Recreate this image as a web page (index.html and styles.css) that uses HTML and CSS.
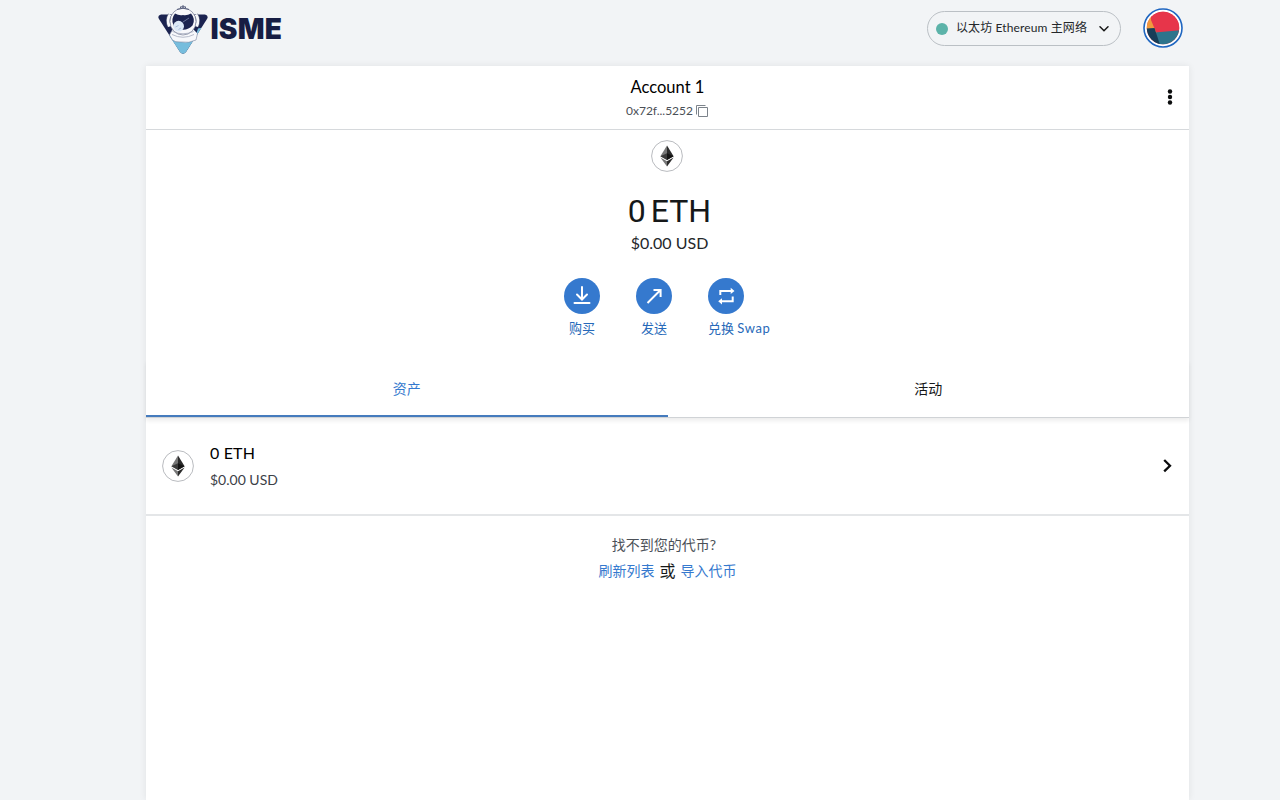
FILE: index.html
```html
<!DOCTYPE html>
<html lang="zh-CN">
<head>
<meta charset="utf-8">
<title>ISME</title>
<link rel="stylesheet" href="styles.css">
</head>
<body>
<svg width="0" height="0" class="symbols">
  <symbol id="eth" viewBox="0 0 32 32">
    <circle cx="16" cy="16" r="15.4" fill="#fff" stroke="#b9bbbf" stroke-width="1"/>
    <path d="M16 5.600 9.400 16.200 16 20z" fill="#777"/>
    <path d="M16 5.600 22.600 16.200 16 20z" fill="#2b2b2b"/>
    <path d="M9.400 16.200 16 13.300V20z" fill="#3a3a3a"/>
    <path d="M22.600 16.200 16 13.300V20z" fill="#141414"/>
    <path d="M9.400 17.500 16 21.300v5.200z" fill="#777"/>
    <path d="M22.600 17.500 16 21.300v5.200z" fill="#2b2b2b"/>
  </symbol>
</svg>
<header class="topbar">
  <div class="brand">
    <svg class="brand-mark" viewBox="0 0 52 50" width="52" height="50">
      <path d="M4 9.500H48Q52 10.500 50 14L29 47Q26 50.500 23 47L2 14Q0 10.500 4 9.500z" fill="#1b2350"/>
      <path d="M12.500 31 38 33 41 23.500 44.500 22.800 29 47Q26 50.500 23 47z" fill="#76bddd"/>
      <path d="M12.500 30 15.500 24.500H36.500L40.500 28.500 39 35Q32 38.500 24 37 18 37.500 15.500 35z" fill="#f7f8fb" stroke="#7c849e" stroke-width=".6"/>
      <path d="M13 9.500q-3.500 5.500-.5 12M39 9.500q3.500 5.500.5 12" fill="none" stroke="#626a85" stroke-width="4"/>
      <path d="M13 9.500q-3.500 5.500-.5 12M39 9.500q3.500 5.500.5 12" fill="none" stroke="#f7f8fb" stroke-width="2.800"/>
      <ellipse cx="26" cy="16.500" rx="13" ry="13.500" fill="#f8f8fb" stroke="#747b93" stroke-width=".7"/>
      <path d="M18 8.500Q22 10.800 26 10 30 10.800 34 8.500 39 14 35.500 20.500 32 24.500 26 24.800 20 24.500 16.500 20.500 13.500 14 18 8.500z" fill="#1b2350"/>
      <circle cx="21.600" cy="21.200" r="5.400" fill="#dbe8f7"/>
      <path d="m18.500 22 3-1.500m0 4 2.500-1.500" stroke="#a3b8d8" stroke-width=".9"/>
      <path d="m26 17 6-4" stroke="#8791b4" stroke-width=".7"/>
      <path d="M15.500 26.500Q26 31 36.500 26.500M15 29.500Q26 35 37 29.500" fill="none" stroke="#9aa0b5" stroke-width=".7"/>
      <path d="M20 4.500Q26 2 32 4.500M23.500 3V1.800H28.500V3M26 0V3" fill="none" stroke="#4c5474" stroke-width=".9"/>
    </svg>
    <span class="brand-name">ISME</span>
  </div>
  <div class="network">
    <span class="dot"></span>
    <span class="network-name">以太坊 Ethereum 主网络</span>
    <svg viewBox="0 0 10 6" width="10" height="6"><path d="m1 .8 4 4 4-4" fill="none" stroke="#161616" stroke-width="1.500" stroke-linecap="round"/></svg>
  </div>
  <svg class="avatar" viewBox="0 0 40 40" width="40" height="40">
    <defs><clipPath id="face"><circle cx="20" cy="20" r="16.200"/></clipPath></defs>
    <circle cx="20" cy="20" r="19" fill="#fff" stroke="#1f66c1" stroke-width="1.600"/>
    <g clip-path="url(#face)">
      <path d="M0 0H40V40H0z" fill="#e7354a"/>
      <path d="M3 3 9 8 7 22H2z" fill="#f19a3e"/>
      <path d="M7 9 4 21 13 26 14 23z" fill="#f19a3e"/>
      <path d="M8 12 13 24H40V0H8z" fill="#e7354a"/>
      <path d="M12 24.500 40 22V40H14z" fill="#2e748c"/>
      <path d="M2 20.500 11.500 20 17 37H2z" fill="#173d58"/>
    </g>
  </svg>
</header>
<main class="wallet">
  <section class="account">
    <div class="account-name">Account 1</div>
    <div class="address"><span>0x72f...5252</span>
      <svg viewBox="0 0 12 12" width="12" height="12"><path d="M2.500 2.500h9v9h-9zM.5 9.500V.5H9.500" fill="none" stroke="#7c838b" stroke-width="1"/></svg>
    </div>
    <svg class="more" viewBox="0 0 6 16" width="6" height="16" fill="#0b0c0d"><circle cx="3" cy="2.500" r="2.200"/><circle cx="3" cy="8" r="2.200"/><circle cx="3" cy="13.500" r="2.200"/></svg>
  </section>
  <section class="overview">
    <svg class="token" width="32" height="32"><use href="#eth"/></svg>
    <div class="balance">0 ETH</div>
    <div class="fiat">$0.00 USD</div>
    <div class="actions">
      <div class="action">
        <svg viewBox="0 0 36 36" width="36" height="36"><circle cx="18" cy="18" r="18" fill="#3579ce"/><path d="M18 9V21M13 16.500 18 21.500 23 16.500M10.500 25H25.500" fill="none" stroke="#fff" stroke-width="2" stroke-linecap="round"/></svg>
        <span>购买</span>
      </div>
      <div class="action">
        <svg viewBox="0 0 36 36" width="36" height="36"><circle cx="18" cy="18" r="18" fill="#3579ce"/><path d="M11.500 25 24.500 12M17.500 11.900H24.600V19" fill="none" stroke="#fff" stroke-width="2"/></svg>
        <span>发送</span>
      </div>
      <div class="action action-wide">
        <svg viewBox="0 0 36 36" width="36" height="36"><circle cx="18" cy="18" r="18" fill="#3579ce"/><path d="M12.300 17V12.900H23M24.700 18.500V23.300H13" fill="none" stroke="#fff" stroke-width="2"/><path d="M22.700 9.800 26.500 12.900 22.700 16zM14 20.200 10.200 23.300 14 26.400z" fill="#fff"/></svg>
        <span>兑换 <b>Swap</b></span>
      </div>
    </div>
  </section>
  <nav class="tabs">
    <div class="tab active">资产</div>
    <div class="tab">活动</div>
  </nav>
  <section class="asset">
    <svg class="token-row" width="32" height="32"><use href="#eth"/></svg>
    <div class="asset-text">
      <div class="asset-amount">0 ETH</div>
      <div class="asset-fiat">$0.00 USD</div>
    </div>
    <svg viewBox="0 0 10 14" width="10" height="14"><path d="m1.200 1 5.800 5.700-5.800 5.700" fill="none" stroke="#0b0c0d" stroke-width="2.300"/></svg>
  </section>
  <footer class="missing">
    <div class="question">找不到您的代币?</div>
    <div class="links"><a>刷新列表</a><span>或</span><a>导入代币</a></div>
  </footer>
</main>
</body>
</html>
```
FILE: styles.css
```css
* { box-sizing: border-box; }
body {
  margin: 0;
  height: 800px;
  overflow: hidden;
  background: #f2f4f6;
  color: #161819;
  font-family: Lato, "Noto Sans CJK SC", sans-serif;
  white-space: nowrap;
}
svg { display: block; flex: none; }
.symbols { position: absolute; }
.topbar {
  height: 66px;
  margin-left: 146px;
  width: 1043px;
  padding: 0 6px 0 11px;
  display: flex;
  align-items: flex-start;
}
.brand { display: flex; margin-top: 5px; flex: 1; }
.brand-name {
  color: #171d43;
  font: 900 28px/48px Inter, sans-serif;
  letter-spacing: .2px;
  margin-left: 1.5px;
}
.network {
  width: 194px;
  height: 35px;
  margin: 11px 22px 0 0;
  padding: 0 11px 0 8px;
  border: 1px solid #bbc0c5;
  border-radius: 18px;
  display: flex;
  align-items: center;
  color: #24272a;
}
.dot { width: 12px; height: 12px; border-radius: 50%; background: #5cb3a9; margin-right: 8px; }
.network-name { font-size: 12px; line-height: 16px; letter-spacing: .12px; flex: 1; margin-top: -1px; }
.avatar { margin-top: 8px; }
.wallet {
  width: 1043px;
  height: 734px;
  margin-left: 146px;
  background: #fff;
  box-shadow: 0 0 7px rgba(0, 0, 0, .08);
}
.account {
  position: relative;
  height: 64px;
  border-bottom: 1px solid #d6d9dc;
  padding-top: 9px;
  display: flex;
  flex-direction: column;
  align-items: center;
}
.account-name { font-size: 16.5px; line-height: 24px; color: #000; }
.address { display: flex; align-items: center; gap: 3px; font-size: 12px; line-height: 18px; margin: 3px 1px 0 0; letter-spacing: -.03px; color: #4b5057; }
.more { position: absolute; right: 16px; top: 23px; }
.overview {
  height: 230px;
  padding-top: 10px;
  display: flex;
  flex-direction: column;
  align-items: center;
}
.token { margin-right: 1px; }
.balance { font: 400 32px/40px Roboto, sans-serif; margin: 19px 0 0 4px; word-spacing: -3px; }
.fiat { font-size: 16px; line-height: 24px; margin: 0 0 0 4px; color: #24272a; }
.actions { display: flex; gap: 36px; margin-top: 23px; margin-right: 27px; }
.action { width: 36px; display: flex; flex-direction: column; align-items: center; font-size: 13px; line-height: 20px; gap: 4px; color: #2769b9; }
.action-wide { align-items: flex-start; }
.action b { font-weight: 400; letter-spacing: .6px; }
.tabs { height: 58px; display: flex; border-bottom: 1px solid #d0d3d6; box-shadow: 0 3px 4px rgba(0, 0, 0, .07); }
.tab { flex: 1; text-align: center; font-size: 14px; line-height: 58px; border-bottom: 2px solid transparent; }
.active { color: #3579ce; border-color: #457bbd; }
.asset {
  height: 98px;
  border-bottom: 2px solid #e4e6e8;
  padding: 0 16px;
  display: flex;
  align-items: center;
}
.asset-text { flex: 1; margin-left: 16px; }
.asset-amount { font-size: 16px; line-height: 26px; letter-spacing: .15px; color: #000; }
.asset-fiat { font-size: 14px; line-height: 27px; color: #3d4147; }
.missing { padding-top: 16px; display: flex; flex-direction: column; align-items: center; }
.question { font-size: 14px; line-height: 26px; color: #4b5057; margin-right: 7px; }
.links { display: flex; gap: 5px; align-items: center; line-height: 26px; font-size: 16px; }
.links a { font-size: 14px; color: #3579ce; }
```
